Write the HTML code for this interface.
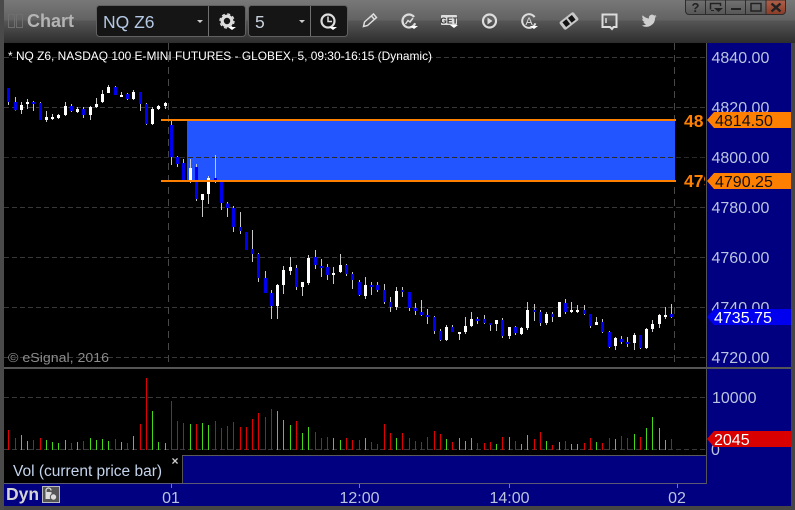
<!DOCTYPE html>
<html><head><meta charset="utf-8"><title>Chart</title>
<style>
html,body{margin:0;padding:0;background:#444;width:795px;height:510px;overflow:hidden}
svg{display:block}
text{font-family:"Liberation Sans",Arial,sans-serif}
.ax{font-size:16px;fill:#bcc4e0}
</style></head><body>
<svg width="795" height="510" viewBox="0 0 795 510" xmlns="http://www.w3.org/2000/svg">
<defs>
<linearGradient id="tb" x1="0" y1="0" x2="0" y2="1"><stop offset="0" stop-color="#787878"/><stop offset=".47" stop-color="#626262"/><stop offset=".48" stop-color="#565656"/><stop offset="1" stop-color="#2d2d2d"/></linearGradient>
<linearGradient id="bt" x1="0" y1="0" x2="0" y2="1"><stop offset="0" stop-color="#727272"/><stop offset="1" stop-color="#565656"/></linearGradient>
<linearGradient id="cl" x1="0" y1="0" x2="0" y2="1"><stop offset="0" stop-color="#b0604a"/><stop offset="1" stop-color="#8a3c28"/></linearGradient>
</defs>
<rect width="795" height="510" fill="#454545"/>
<rect width="795" height="43" fill="url(#tb)"/>
<!-- main area -->
<rect x="4" y="43" width="703" height="441" fill="#000"/>
<rect x="707" y="43" width="84" height="463" fill="#000080"/>
<rect x="4" y="484" width="787" height="22" fill="#000080"/>
<!-- title -->
<g fill="none" stroke="#6e6e6e"><rect x="8.500" y="14.500" width="6" height="13"/><rect x="16.500" y="14.500" width="6" height="13"/></g>
<text x="27" y="27" font-size="18" font-weight="bold" fill="#b4b4b4">Chart</text>
<rect x="96.500" y="5.500" width="149" height="31" rx="3" fill="#151515" stroke="#606060"/>
<rect x="248.500" y="5.500" width="99" height="31" rx="3" fill="#151515" stroke="#606060"/>
<path d="M208.500 6V36M310.500 6V36" stroke="#707070"/>
<text x="103" y="28" font-size="17.500" fill="#b4c8e4">NQ Z6</text>
<text x="255" y="28" font-size="17.500" fill="#c8d0dc">5</text>
<path d="M197 20h6l-3 3zM299 20h6l-3 3z" fill="#ccc"/>
<g fill="none" stroke="#ddd">
<!-- gear -->
<circle cx="227" cy="21" r="4.800" stroke-width="3.200"/>
<circle cx="227" cy="21" r="7" stroke-width="1.400" stroke-dasharray="3 2.500"/>
<!-- clock -->
<circle cx="328" cy="21" r="6.500" stroke-width="2.200"/>
<path d="M328 16.500V21.500H332" stroke-width="1.500"/>
<!-- pencil -->
<path d="M363.500 26.500l1-4.500 9-8 3 3.500-9 8zM371.500 16l3 3.500" stroke-width="1.500"/>
<!-- refresh chart -->
<circle cx="409" cy="21" r="6.500" stroke-width="2.200" stroke-dasharray="34 7" transform="rotate(20 409 21)"/>
<path d="M405.500 24l2.500-3.500 2 1.500 3-4" stroke-width="1.500"/>
<!-- play -->
<circle cx="489.500" cy="21" r="6.500" stroke-width="2.200"/>
<!-- A -->
<circle cx="529" cy="21" r="6.800" stroke-width="2" stroke-dasharray="36 7" transform="rotate(20 529 21)"/>
<!-- bubble -->
<path d="M602.500 14.500h14v12.500h-3l-1.500 2-2-2h-7.500z" stroke-width="2"/>
<path d="M606 18v5" stroke-width="1.500"/>
</g>
<path d="M487.500 17.500l5 3.500-5 3.500z" fill="#ddd"/>
<text x="529" y="25" font-size="11" fill="#ddd" text-anchor="middle">A</text>
<path d="M228 27h8l-4 3zM329 27h8l-4 3zM410 26h8l-4 3zM450 25h8l-4 3zM530 26h8l-4 3z" fill="#fff"/>
<rect x="441" y="15" width="16" height="10" rx="1" fill="#ddd"/>
<text x="449" y="23.500" font-size="8.500" font-weight="bold" fill="#333" text-anchor="middle" font-family="Liberation Mono">GET</text>
<g transform="rotate(-38 569 21)"><rect x="560" y="16" width="18" height="10" rx="2" fill="#c8c8c8"/><rect x="563" y="18" width="5" height="6" fill="#111"/><rect x="570" y="18" width="5" height="6" fill="#111"/></g>
<path transform="translate(641 13) scale(.68)" fill="#cfcfcf" d="M23 4.600a9 9 0 0 1-2.600.7 4.500 4.500 0 0 0 2-2.500 9 9 0 0 1-2.900 1.100 4.500 4.500 0 0 0-7.700 4.100A12.800 12.800 0 0 1 2.500 3.300a4.500 4.500 0 0 0 1.400 6 4.500 4.500 0 0 1-2-.6 4.500 4.500 0 0 0 3.600 4.500 4.500 4.500 0 0 1-2 .1 4.500 4.500 0 0 0 4.200 3.100A9 9 0 0 1 1 18.300 12.800 12.800 0 0 0 20.700 7c.9-.6 1.700-1.400 2.300-2.400z"/>
<!-- window buttons -->
<path d="M685.500 0V11a3.500 3.500 0 0 0 3.500 3.500H766V0z" fill="url(#bt)" stroke="#2c2c2c"/>
<path d="M766 0V14.500H782a3.500 3.500 0 0 0 3.500-3.500V0z" fill="url(#cl)" stroke="#2c2c2c"/>
<path d="M705.500 0V14M725.500 0V14M745.500 0V14" stroke="#2c2c2c"/>
<text x="695.500" y="12" font-size="13" font-weight="bold" fill="#222" text-anchor="middle">?</text>
<path d="M710.500 9.500V3.500H720.500V6" fill="none" stroke="#222" stroke-width="1.500"/><path d="M714 8h9l-4.500 4z" fill="#222"/><path d="M711 10.500h3" stroke="#222"/>
<rect x="731" y="8" width="10" height="2" fill="#222"/>
<rect x="751" y="3.500" width="10" height="7.500" fill="none" stroke="#222" stroke-width="1.500"/>
<path d="M771.500 3.500l9 8M780.500 3.500l-9 8" stroke="#222" stroke-width="2.500"/>
<!-- grid -->
<path d="M4 57.500H707M4 107.500H707M4 207.500H707M4 257.500H707M4 307.500H707M4 357.500H707M4 397.500H707M4 449.500H707" stroke="#383838" stroke-dasharray="5 3"/>
<path d="M168.500 43V367M674.500 43V367" stroke="#484848" stroke-dasharray="7 5"/>
<!-- zone -->
<rect x="187" y="120" width="488" height="61" fill="#2255ff"/>
<path d="M4 157.500H707" stroke="#2a2a2a" stroke-dasharray="5 3"/>
<!-- candles -->
<g fill="none" shape-rendering="crispEdges">
<g transform="translate(.1667 70) scale(.33333)">
<path stroke="#c8c8c8" stroke-width="3" d="M25 54V105M46 81V122M64 96V132M82 87V117M100 93V123M121 96V150M139 123V156M157 132V150M175 132V147M196 96V138M214 102V126M232 111V129M250 111V144M271 108V150M289 84V114M307 60V99M325 45V69M346 48V75M364 66V81M382 69V90M400 60V90M421 66V123M439 99V165M457 111V165M475 105V120M496 96V117M514 150V285M532 258V291M550 267V333M571 267V339M589 282V393M607 372V441M625 318V402M646 255V339M664 330V420M682 396V441M700 408V486M721 426V492"/>
<path stroke="#0000ee" stroke-width="9" d="M25 54V96M46 96V120M100 96V102M121 99V150M214 108V123M250 117V135M346 51V75M382 72V87M421 66V102M439 102V162M514 165V261M532 261V282M550 279V330M589 291V387M646 324V330M664 330V399M682 400V414M700 414V471M721 471V483"/>
<path stroke="#fff" stroke-width="9" d="M64 105V120M82 96V102M139 141V150M157 141V147M175 135V144M196 108V135M232 117V126M271 111V135M289 102V111M307 72V96M325 51V69M364 75V81M400 66V87M457 117V162M475 108V117M496 99V108M571 294V330M607 372V390M625 324V372"/>
</g>
<g transform="translate(230.1667 230) scale(.33333)">
<path stroke="#c8c8c8" stroke-width="3" d="M49 6V60M67 0V96M85 69V156M106 123V189M124 180V267M142 162V267M160 108V192M181 81V135M199 105V180M217 156V198M235 75V165M256 60V117M274 87V141M292 102V150M310 111V162M331 72V129M349 102V138M367 126V177M388 150V198M406 141V207M424 156V195M442 156V186M463 162V222M481 201V246M499 171V240M517 171V201M538 186V243M556 219V255M574 210V258M592 237V282M613 258V312M631 297V333M649 285V333M667 285V306M688 306V330M706 261V312"/>
<path stroke="#0000ee" stroke-width="9" d="M49 6V60M67 57V72M85 72V144M106 144V189M124 189V228M199 114V171M256 81V105M274 108V114M292 111V135M349 105V132M367 132V150M388 156V195M424 165V171M442 165V180M463 180V216M481 216V231M517 180V186M538 186V234M556 234V243M574 246V255M592 255V261M613 261V303M631 303V330M667 291V306"/>
<path stroke="#fff" stroke-width="9" d="M142 165V228M160 120V165M181 111V123M217 156V171M235 84V159M310 129V135M331 105V126M406 165V198M499 183V231M649 291V330M688 306V312M706 288V306"/>
</g>
<g transform="translate(460.1667 280) scale(.33333)">
<path stroke="#c8c8c8" stroke-width="3" d="M34 96V141M52 111V132M73 105V132M91 129V153M109 120V153M127 114V174M148 141V177M166 138V165M184 141V165M202 66V150M223 72V123M241 90V138M259 96V135M277 96V126M316 57V102M334 66V99M352 75V99M373 75V105M391 102V144M409 111V135M427 117V159M448 153V204M466 171V210M484 168V192M502 171V201M523 159V210M541 165V207M559 144V207M577 120V156M598 102V144M616 81V117M634 72V114"/>
<path stroke="#0000ee" stroke-width="9" d="M52 117V123M73 117V129M91 129V135M127 120V168M166 141V159M223 90V96M241 96V129M277 102V111M316 69V96M373 90V102M391 102V138M427 126V156M448 156V201M484 177V186M502 186V192M541 165V204M634 102V111"/>
<path stroke="#fff" stroke-width="9" d="M34 117V138M109 120V132M148 141V168M184 144V162M202 90V144M259 102V129M298 66V111M334 90V96M352 90V96M409 126V135M466 174V198M523 165V189M559 147V204M577 132V147M598 105V132M616 105V111"/>
</g>
<!-- volume -->
<g transform="translate(.1667 360) scale(.33333)" stroke-width="3">
<path stroke="#e00000" d="M25 210V270M46 234V270M100 240V270M121 234V270M214 249V270M250 243V270M346 237V270M382 249V270M421 192V270M439 54V270M514 123V270M532 183V270M550 189V270M589 192V270M646 183V270M664 204V270M682 198V270M700 186V270M721 201V270M739 201V270M757 177V270M775 159V270M796 171V270"/>
<path stroke="#44d818" d="M64 225V270M82 243V270M139 240V270M157 246V270M175 249V270M196 240V270M232 246V270M271 234V270M289 240V270M307 237V270M325 243V270M364 246V270M400 228V270M457 153V270M475 246V270M496 249V270M571 192V270M607 189V270M625 195V270"/>
</g>
<g transform="translate(270.1667 360) scale(.33333)" stroke-width="3">
<path stroke="#e00000" d="M4 147V270M79 183V270M136 216V270M154 234V270M172 231V270M229 234V270M247 240V270M268 240V270M304 246V270M322 252V270M343 192V270M361 219V270M397 219V270M418 234V270M436 243V270M454 246V270M472 231V270M493 213V270M511 222V270M547 246V270M622 249V270M643 249V270M661 246V270M697 231V270M736 243V270M793 237V270"/>
<path stroke="#44d818" d="M22 153V270M40 180V270M61 195V270M97 219V270M115 201V270M190 234V270M211 240V270M286 234V270M379 234V270M529 237V270M568 234V270M586 243V270M604 234V270M679 252V270M718 231V270M754 252V270M772 225V270"/>
</g>
<g transform="translate(540.1667 360) scale(.33333)" stroke-width="3">
<path stroke="#e00000" d="M1 216V270M37 255V270M76 243V270M133 249V270M151 234V270M187 249V270M208 234V270M244 228V270M262 234V270M301 231V270M394 237V270"/>
<path stroke="#44d818" d="M19 243V270M58 246V270M94 252V270M112 252V270M169 246V270M226 237V270M283 222V270M319 204V270M337 171V270M358 204V270M376 240V270"/>
</g>
<!-- orange lines -->
<rect x="161" y="119" width="515" height="2" fill="#ff8000"/>
<rect x="161" y="180" width="515" height="2" fill="#ff8000"/>
</g>
<!-- separators -->
<rect x="0" y="367" width="791" height="2" fill="#555"/>
<rect x="182" y="455" width="525" height="1" fill="#5a5a5a"/>
<rect x="183" y="456" width="523" height="27" fill="#000080"/>
<rect x="182" y="456" width="1" height="27" fill="#555"/>
<rect x="4" y="483" width="703" height="1" fill="#5a5a70"/>
<rect x="706" y="43" width="1" height="441" fill="#555"/>
<rect x="0" y="0" width="4" height="510" fill="#4a4a4a"/>
<path d="M171.500 484V488M359.500 484V488M509.500 484V488M677.500 484V488" stroke="#77779a"/>
<!-- texts -->
<text x="8" y="60" font-size="12" fill="#fff" textLength="424" lengthAdjust="spacingAndGlyphs">* NQ Z6, NASDAQ 100 E-MINI FUTURES - GLOBEX, 5, 09:30-16:15 (Dynamic)</text>
<text x="8" y="362" font-size="13" fill="#8c8c8c" textLength="101" lengthAdjust="spacingAndGlyphs">© eSignal, 2016</text>
<text class="ax" x="711.500" y="63">4840.00</text>
<text class="ax" x="711.500" y="113">4820.00</text>
<text class="ax" x="711.500" y="163">4800.00</text>
<text class="ax" x="711.500" y="213">4780.00</text>
<text class="ax" x="711.500" y="263">4760.00</text>
<text class="ax" x="711.500" y="313">4740.00</text>
<text class="ax" x="711.500" y="363">4720.00</text>
<text class="ax" x="712" y="403">10000</text>
<text class="ax" x="711" y="455">0</text>
<path d="M707 120l7-8h77v16h-77z" fill="#ff8000"/>
<path d="M707 181l7-8h77v16h-77z" fill="#ff8000"/>
<path d="M707 317l7-8h77v16h-77z" fill="#0000ee"/>
<path d="M707 439l7-8h77v16h-77z" fill="#d80000"/>
<text x="715" y="126" font-size="16" fill="#111">4814.50</text>
<text x="715" y="187" font-size="16" fill="#111">4790.25</text>
<text x="714" y="323" font-size="16" fill="#fff">4735.75</text>
<text x="714" y="445" font-size="16" fill="#fff">2045</text>
<text x="684" y="127" font-size="17.500" font-weight="bold" fill="#ff8000">48</text>
<svg x="684" y="170" width="21" height="20"><text x="0" y="17" font-size="17.500" font-weight="bold" fill="#ff8000">479</text></svg>
<text x="13" y="476" font-size="15.500" fill="#c4d4ec">Vol (current price bar)</text>
<text x="175" y="465" font-size="12" font-weight="bold" fill="#ccc" text-anchor="middle">×</text>
<text x="6" y="500" font-size="17.500" font-weight="bold" fill="#d4d4d4">Dyn</text>
<rect x="42.500" y="486.500" width="17" height="16" fill="#555" stroke="#bbb"/>
<path d="M46 492v-1.500a2.500 2.500 0 0 1 5 0" fill="none" stroke="#ddd" stroke-width="1.200"/>
<rect x="45.500" y="492" width="6" height="7" fill="#ddd"/>
<circle cx="53.500" cy="497" r="3.200" fill="#ddd" stroke="#555"/>
<text class="ax" x="171" y="503" text-anchor="middle">01</text>
<text class="ax" x="359.500" y="503" text-anchor="middle">12:00</text>
<text class="ax" x="509.500" y="503" text-anchor="middle">14:00</text>
<text class="ax" x="677" y="503" text-anchor="middle">02</text>
</svg>
</body></html>
